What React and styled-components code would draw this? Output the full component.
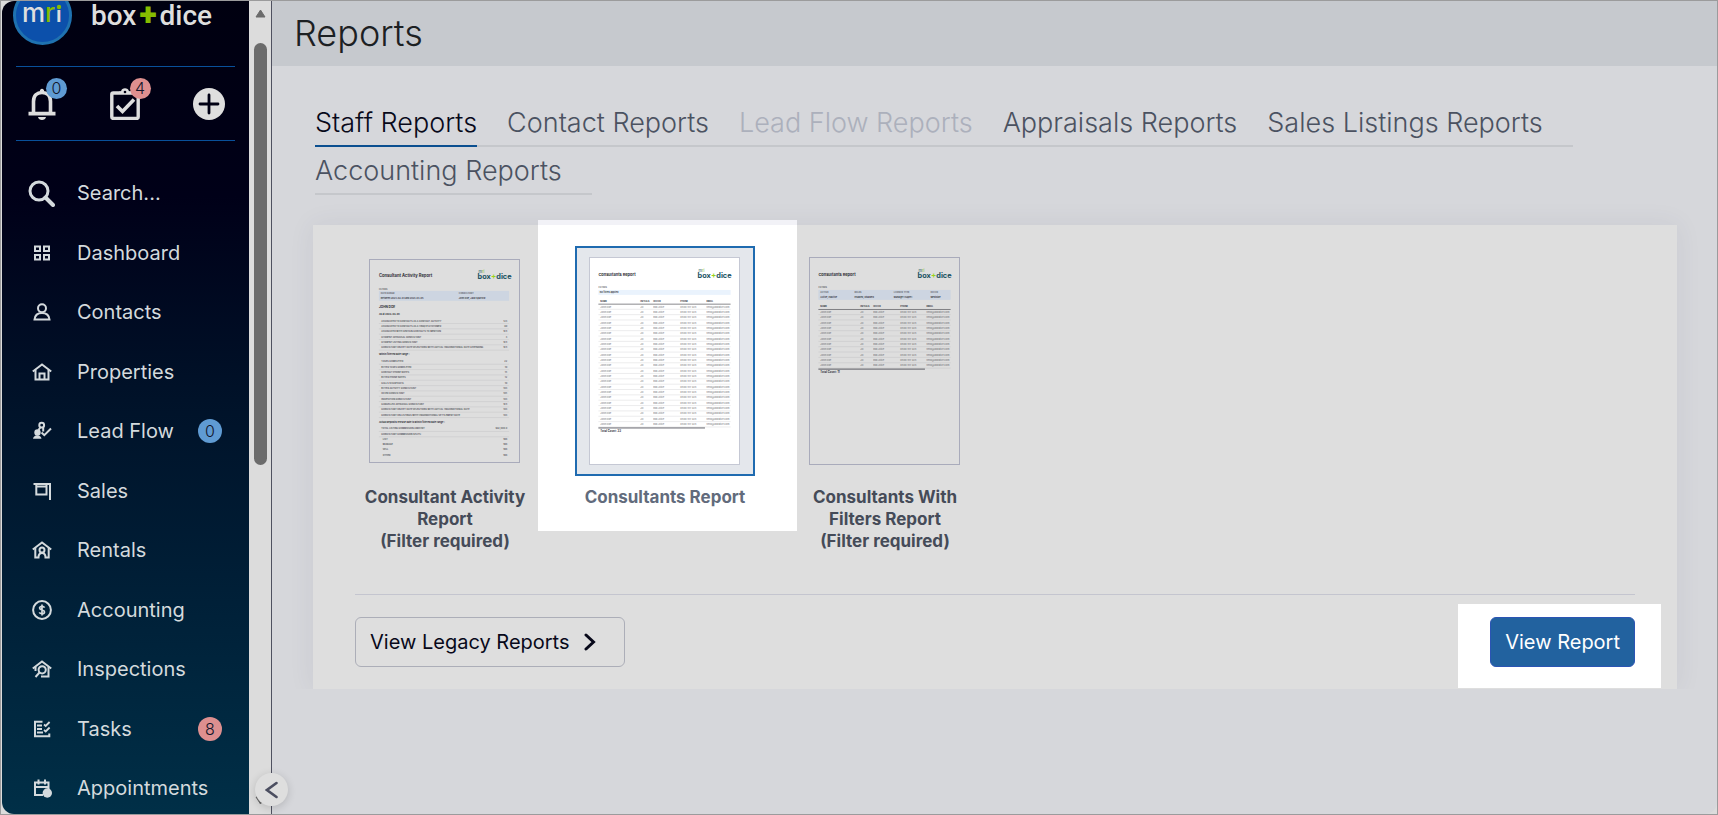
import { useState } from 'react';
import styled, { createGlobalStyle, css } from 'styled-components';

const GlobalStyle = createGlobalStyle`
	* {
		box-sizing: border-box;
	}

	body {
		margin: 0;
		font-family: Inter, "Open Sans", sans-serif;
		background: #d6d7db;
	}

	button {
		font-family: inherit;
		cursor: pointer;
	}
`;

const Frame = styled.div`
	display: flex;
	min-height: 100vh;
	padding-left: 1px;
	border: 1px solid #9b9b9c;
	background: #dcdcdc;
`;

/* ---------- sidebar ---------- */

const Sidebar = styled.aside`
	display: flex;
	flex-direction: column;
	flex: 0 0 247px;
	padding: 0 14px 6px;
	overflow: hidden;
	border-radius: 12px 0 0 12px;
	background: linear-gradient(#000010 0%, #000018 24%, #001229 49%, #002038 74%, #002f47 100%);
	color: #dedede;
`;

const Brand = styled.a`
	display: flex;
	align-items: center;
	gap: 19px;
	margin-top: -15px;
	padding: 0 0 20px;
	border-bottom: 1px solid #09509a;
	color: inherit;
	text-decoration: none;

	svg {
		overflow: visible;
	}
`;

const BrandName = styled.span`
	font-family: Roboto, sans-serif;
	font-size: 28px;
	line-height: 28px;
	font-weight: 500;

	b {
		padding: 0 3px;
		color: #86bc00;
		font-size: 32px;
		line-height: 1px;
		font-weight: 900;
	}
`;

const QuickActions = styled.div`
	display: flex;
	justify-content: space-between;
	padding: 21px 10px 20px 12px;
	border-bottom: 1px solid #09509a;
`;

const QuickButton = styled.button`
	position: relative;
	display: flex;
	padding: 0;
	border: 0;
	background: none;
	color: #dedede;
`;

const badgeTone = css`
	background: ${(props) => (props.$tone === 'red' ? '#dd8f8f' : '#5f9bd3')};
	color: #12162b;
	font-size: 16px;
	font-weight: 300;
	text-align: center;
`;

const CornerBadge = styled.span`
	${badgeTone}
	position: absolute;
	top: -10px;
	right: -11px;
	width: 21px;
	line-height: 21px;
	border-radius: 50%;
`;

const NavList = styled.nav`
	display: flex;
	flex: 1;
	flex-direction: column;
	justify-content: space-between;
	padding-top: 32px;
`;

const NavItem = styled.a`
	display: flex;
	align-items: center;
	height: 40px;
	padding: 0 13px 0 10px;
	color: #d4dadd;
	font-size: 20px;
	text-decoration: none;
`;

const NavIcon = styled.span`
	display: flex;
	justify-content: center;
	flex: 0 0 31px;
	margin-right: 20px;
`;

const RowBadge = styled.span`
	${badgeTone}
	width: 24px;
	margin-left: auto;
	line-height: 24px;
	border-radius: 50%;
`;

const ScrollTrack = styled.div`
	display: flex;
	flex-direction: column;
	align-items: center;
	flex: 0 0 22px;
	padding: 8px 0 9px;
	background: #dcdcdc;
`;

const ScrollThumb = styled.div`
	width: 13px;
	height: 53%;
	margin: 25px 0 auto;
	border-radius: 7px;
	background: #6b6b6b;
`;

/* ---------- main area ---------- */

const Main = styled.main`
	position: relative;
	flex: 1;
	min-width: 0;
	border-left: 1px solid #4f5160;
	border-radius: 0 0 12px 0;
	background: #d6d7db;
`;

const CollapseButton = styled.button`
	position: absolute;
	left: -17px;
	bottom: 8px;
	display: flex;
	align-items: center;
	justify-content: center;
	width: 33px;
	height: 33px;
	padding: 0;
	border: 0;
	border-radius: 50%;
	background: #dedede;
	box-shadow: 0 2px 8px rgba(0, 0, 0, 0.16);
	color: #4b4e60;
`;

const TitleBar = styled.header`
	padding: 0 22px;
	background: #c6c9ce;

	h1 {
		margin: 0;
		color: #1c2023;
		font-size: 36px;
		line-height: 65px;
		font-weight: 300;
	}
`;

const Content = styled.div`
	padding: 33px 40px 40px 41px;
`;

const Tabs = styled.div`
	display: flex;
	flex-wrap: wrap;
	margin: 0 2px 30px;
`;

const TabCell = styled.div`
	padding-right: 30px;
	border-bottom: 2px solid #c5c7cb;
`;

const Tab = styled.button`
	display: block;
	margin-bottom: -2px;
	padding: 2px 0 0;
	border: 0;
	border-bottom: 2px solid ${(props) => (props.$active ? '#0b4f90' : 'transparent')};
	background: none;
	color: ${(props) => (props.$active ? '#08091a' : '#4b5261')};
	font-size: 27px;
	line-height: 44px;
	font-weight: 300;

	&:disabled {
		color: #acb0bc;
		cursor: default;
	}
`;

const Panel = styled.section`
	isolation: isolate;
	padding: 21px 42px 22px;
	background: #dedede;
	box-shadow: 0 0 24px rgba(60, 60, 100, 0.08);
	clip-path: inset(-24px -24px 0 -24px);
`;

const ReportList = styled.div`
	display: flex;
	flex-wrap: wrap;
	gap: 40px;
	padding-bottom: 42px;
	border-bottom: 1px solid #c4c5cf;
`;

const ReportCard = styled.button`
	position: relative;
	display: flex;
	flex-direction: column;
	align-items: center;
	gap: 10px;
	width: 180px;
	padding: 0;
	border: 0;
	background: none;
	color: ${(props) => (props.$active ? '#626b7c' : '#454b58')};
	font-size: 17px;
	line-height: 22px;
	font-weight: 700;

	/* white halo behind the chosen report, reaching over the panel's top edge */
	&::before {
		content: "";
		display: ${(props) => (props.$active ? 'block' : 'none')};
		position: absolute;
		z-index: -1;
		inset: -26px -42px 21px -37px;
		border-top: 5px solid #f2f2f7;
		background: #fff;
	}
`;

const SheetFrame = styled.span`
	display: flex;
	align-items: center;
	width: 180px;
	height: 230px;
	padding: 0 12px;
	border: 2px solid ${(props) => (props.$active ? '#1f6bb0' : 'transparent')};
	background: ${(props) => (props.$active ? '#e4e7ec' : 'none')};

	svg {
		border: 1px solid ${(props) => (props.$active ? '#c5c8d4' : '#a9abbb')};
		background: ${(props) => (props.$active ? '#fff' : 'none')};
	}
`;

const CardLabel = styled.span`
	width: 172px;
	white-space: pre-line;
`;

const PanelFooter = styled.footer`
	display: flex;
	align-items: center;
	justify-content: space-between;
	padding-top: 22px;
`;

const Button = styled.button`
	display: flex;
	align-items: center;
	gap: 14px;
	height: 50px;
	padding: 0 ${(props) => (props.$primary ? '14px' : '28px')} 0 14px;
	border: 1px solid ${(props) => (props.$primary ? '#2b54b4' : '#acaeb8')};
	border-radius: 6px;
	background: ${(props) => (props.$primary ? '#22629f' : 'none')};
	color: ${(props) => (props.$primary ? '#fff' : '#08091a')};
	font-size: 20px;
`;

const Halo = styled.span`
	position: relative;

	&::before {
		content: "";
		position: absolute;
		z-index: -1;
		inset: -13px -26px -21px -32px;
		background: #fff;
	}
`;

/* ---------- icons ---------- */

function Icon({ size = 20, width = 2, children }) {
	return (
		<svg width={size} height={size} viewBox={`0 0 ${size} ${size}`} fill="none" stroke="currentColor" strokeWidth={width} aria-hidden="true">
			{children}
		</svg>
	);
}

const SearchIcon = () => (
	<Icon size={27} width={3}>
		<circle cx="11" cy="11" r="9" />
		<path d="M17.5 17.5 L25 25" strokeWidth="4" strokeLinecap="round" />
	</Icon>
);

const DashboardIcon = () => (
	<Icon>
		<path d="M3 3.5h5v4.5H3z M12 3.5h5v4.5h-5z M3 12h5v4.5H3z M12 12h5v4.5h-5z" />
	</Icon>
);

const ContactsIcon = () => (
	<Icon>
		<circle cx="10" cy="6.2" r="4" />
		<path d="M2.5 17.5 C3 12.5 6 11 10 11 S17 12.5 17.5 17.5 Z" />
	</Icon>
);

const PropertiesIcon = () => (
	<Icon>
		<path d="M0.8 9.5 L10 2.5 L19.2 9.5" />
		<path d="M3.5 8 V17.5 H16.5 V8 M7.5 17 V11.5 H12.5 V17" />
	</Icon>
);

const LeadFlowIcon = () => (
	<Icon>
		<circle cx="9.7" cy="4.2" r="2.4" />
		<path d="M8.2 6.5 L6.5 9 M11.2 6.5 V10.5" />
		<circle cx="5.5" cy="11.5" r="3.2" fill="currentColor" stroke="none" />
		<path d="M1 17.8 C1.5 13 9 13 9.5 17.8" fill="currentColor" stroke="none" />
		<path d="M9.5 11.5 L12.3 14.2 L19 7.5" />
	</Icon>
);

const SalesIcon = () => (
	<Icon>
		<path d="M1.5 3 H18 V19" />
		<path d="M4.3 3 V13.5 H14.5 V3 M4.3 5.5 H14.5" />
	</Icon>
);

const RentalsIcon = () => (
	<Icon>
		<path d="M0.8 9.5 L10 2.5 L19.2 9.5" />
		<path d="M3.3 8 V17.5 H6.5 C6.5 14 8 13 10 13 S13.5 14 13.5 17.5 H16.7 V8" />
		<circle cx="10" cy="10" r="2.5" />
	</Icon>
);

const AccountingIcon = () => (
	<Icon>
		<circle cx="10" cy="10" r="8.9" />
		<path d="M12.6 7.6 C12 6.6 11 6.4 10 6.4 C8.6 6.4 7.6 7 7.6 8.1 C7.6 10.6 12.5 9.4 12.5 11.9 C12.5 13 11.4 13.6 10 13.6 C8.8 13.6 7.8 13.2 7.3 12.3 M10 4.6 V15.4" strokeWidth="1.7" />
	</Icon>
);

const InspectionsIcon = () => (
	<Icon>
		<path d="M0.8 9.5 L10 2.5 L19.2 9.5" />
		<path d="M3.5 8 V12 M9 17.5 H16.5 V8" />
		<circle cx="10.2" cy="10.8" r="3.6" />
		<path d="M7.5 13.5 L3.5 18" />
	</Icon>
);

const TasksIcon = () => (
	<Icon>
		<path d="M10.5 2.8 H3 V17.2 H17.3 V14.5 M5 6.5 H10 M5 10 H10 M5 13.5 H11" />
		<path d="M12 5.5 L13.7 7 L17.6 3 M12 11 L13.7 12.5 L17.6 8.5" strokeWidth="1.8" />
	</Icon>
);

const AppointmentsIcon = () => (
	<Icon>
		<path d="M3 4.5 H16.5 V11 M3 3.5 V17 H11 M3 9 H16 M6.5 1.5 V6.5 M13 1.5 V6.5" />
		<circle cx="15.3" cy="15" r="4.7" fill="currentColor" stroke="none" />
	</Icon>
);

const BellIcon = () => (
	<svg width="28" height="32" viewBox="0 0 28 32" fill="none" stroke="currentColor" strokeWidth="3.6" aria-hidden="true">
		<path d="M5.5 26 V13.5 C5.5 7.5 9 4.5 14 4.5 S22.5 7.5 22.5 13.5 V26" />
		<path d="M0.5 25.6 H27.5" />
		<path d="M11.8 3.5 C11.8 -0.2 16.2 -0.2 16.2 3.5 Z M10 29 H18 C17.5 33 10.5 33 10 29 Z" fill="currentColor" stroke="none" />
	</svg>
);

const ClipboardIcon = () => (
	<svg width="30" height="32" viewBox="0 0 30 32" fill="none" stroke="currentColor" strokeWidth="3.4" aria-hidden="true">
		<rect x="1.8" y="5" width="26.4" height="25.4" rx="1.5" />
		<path d="M9 6 V3.5 H11 C11.5 -0.8 18.5 -0.8 19 3.5 H21 V6 Z" fill="currentColor" stroke="none" />
		<circle cx="15" cy="4" r="1.3" fill="#000014" stroke="none" />
		<path d="M7 18 L12.5 23.5 L24 11.5" strokeWidth="3.6" />
	</svg>
);

const AddIcon = () => (
	<svg width="32" height="32" viewBox="0 0 32 32" aria-hidden="true">
		<circle cx="16" cy="16" r="16" fill="currentColor" />
		<path d="M16 7 V25 M7 16 H25" stroke="#000014" strokeWidth="2.8" strokeLinecap="round" />
	</svg>
);

const MriLogo = () => (
	<svg width="56" height="60" viewBox="3 0 56 60" role="img" aria-label="mri">
		<circle cx="29.5" cy="29.5" r="28" fill="#0c50ab" stroke="#1f72b0" strokeWidth="3" />
		<text x="9" y="36" fontFamily="Inter, sans-serif" fontSize="26" fontWeight="500" fill="#dedede">
			m<tspan fill="#86bc00">r</tspan>i
		</text>
		<path d="M43 13 H50 V24 H43 Z" fill="#0c50ab" />
		<circle cx="46" cy="21" r="2.2" fill="#86bc00" />
	</svg>
);

const ScrollArrow = ({ down }) => (
	<svg width="11" height="9" viewBox="0 0 11 9" fill="#6b6b6b" stroke="#6b6b6b" strokeLinejoin="round" aria-hidden="true">
		<path d={down ? 'M1 1 H10 L5.5 8 Z' : 'M1 8 H10 L5.5 1 Z'} />
	</svg>
);

/* ---------- report previews ---------- */

const SHEET_FONT = 'Inter, sans-serif';

const SheetLogo = ({ y }) => (
	<g fontFamily={SHEET_FONT} fontWeight="700" fill="#17505f">
		<text x="110" y={y - 6} fontSize="4" fontWeight="400">
			m<tspan fill="#7fb81a">ri</tspan>
		</text>
		<text x="109" y={y} fontSize="7.4">
			box
		</text>
		<text x="122.6" y={y} fontSize="8" fill="#9bd31a">
			+
		</text>
		<text x="128" y={y} fontSize="7.4">
			dice
		</text>
	</g>
);

const activityLines = [
	['ASSOCIATED TO CONTACTS AS A CONTACT ACTIVITY', '123'],
	['ASSOCIATED TO CONTACTS AS A UNIQUE CUSTOMER', '90'],
	['ASSOCIATED WITH CERTAIN CONTACTS TO MENTION', '104'],
	['CURRENT APPRAISAL CONSULTANT', '3'],
	['CURRENT LISTING CONSULTANT', '104'],
	['CONSULTANT ON KEY DATE SELECTIONS WITH ACTUAL UNCONDITIONAL DATE APPENDING', '104'],
];

const rangeLines = [
	['TASKS COMPLETED', '22'],
	['BUYER TASKS COMPLETED', '10'],
	['CONTACT PHONE NOTES', '15'],
	['BUYER PHONE NOTES', '12'],
	['CALLS SUCCESSFUL', '10'],
	['BUYER ACTIVITY CONSULTANT', '103'],
	['OFFER CONSULTANT', '105'],
	['INSPECTION CONSULTANT', '103'],
	['CANCELLED APPRAISAL CONSULTANT', '104'],
	['CONSULTANT ON KEY DATE SELECTIONS WITH ACTUAL UNCONDITIONAL DATE', '103'],
	['CONSULTANT ON LISTINGS WITH UNCONDITIONAL SETTLEMENT DATE', '103'],
];

const feeLines = [
	['TOTAL LISTING COMMISSION AMOUNT', '$92,000.0'],
	['CONSULTANT COMMISSION SPLITS:', ''],
];

const splitLines = ['LIST', 'MANAGE', 'SELL', 'OTHER'];

function SheetLines({ lines, top }) {
	return lines.map(([label, value], i) => {
		const y = top + i * 5.4;
		return (
			<g key={label}>
				<text x="11.5" y={y} fontSize="2.3" fontWeight="600" opacity="0.85">
					{label}
				</text>
				<text x="139" y={y} fontSize="2.3" textAnchor="end" opacity="0.7">
					{value}
				</text>
				<path d={`M9 ${y + 2} H141`} stroke="#c0c0c2" strokeWidth="0.4" />
			</g>
		);
	});
}

const ActivitySheet = () => (
	<svg width="151" height="204" viewBox="0 0 151 204" fontFamily={SHEET_FONT} fill="#303038" aria-hidden="true">
		<text x="9" y="16.5" fontSize="4.2" fontWeight="700">
			Consultant Activity Report
		</text>
		<SheetLogo y={19} />
		<text x="9" y="30" fontSize="2.2" opacity="0.7">
			FILTERS
		</text>
		<rect x="9" y="31" width="132" height="10" fill="#cdd5e1" />
		<text x="11" y="34.6" fontSize="2.2" opacity="0.7">
			DATE RANGE
		</text>
		<text x="90" y="34.6" fontSize="2.2" opacity="0.7">
			CONSULTANT
		</text>
		<text x="11" y="39.4" fontSize="2.3" fontWeight="600">
			Between 2023-02-03 and 2023-03-06
		</text>
		<text x="90" y="39.4" fontSize="2.3" fontWeight="600">
			John Doe, Jack Sparrow
		</text>
		<text x="9" y="48.8" fontSize="3.2" fontWeight="700">
			JOHN DOE
		</text>
		<text x="9" y="55" fontSize="2.4" fontWeight="700">
			As at 2023-03-06
		</text>
		<SheetLines lines={activityLines} top={62} />
		<text x="9" y="96.3" fontSize="2.4" fontWeight="700">
			Within filtered date range :
		</text>
		<SheetLines lines={rangeLines} top={103.3} />
		<text x="9" y="164.5" fontSize="2.4" fontWeight="700">
			Actual deposits release date is within filtered date range :
		</text>
		<SheetLines lines={feeLines} top={171.4} />
		{splitLines.map((label, i) => (
			<g key={label} fontSize="2.3" opacity="0.85">
				<text x="13" y={182 + i * 5.3} fontWeight="600">
					{label}
				</text>
				<text x="139" y={182 + i * 5.3} textAnchor="end">
					103
				</text>
			</g>
		))}
	</svg>
);

const sheetColumns = [
	{ x: 10.5, head: 'NAME', value: 'John Doe' },
	{ x: 51, head: 'INITIALS', value: 'JD' },
	{ x: 64, head: 'OFFICE', value: 'Box+Dice' },
	{ x: 91.5, head: 'PHONE', value: '0400 417 324' },
	{ x: 118, head: 'EMAIL', value: 'hello@boxdice.com' },
];

const sheetFilters = [
	{ x: 10.5, head: 'ACTIVE', value: 'Active, Inactive' },
	{ x: 45, head: 'ROLES', value: 'Enabled, Disabled' },
	{ x: 85, head: 'LICENCE TYPE', value: 'Manager (Super)' },
	{ x: 122, head: 'OFFICE', value: 'Westside' },
];

function ConsultantsSheet({ rows, filtered }) {
	const head = filtered ? 49.6 : 44.2;
	const first = head + 5.6;
	const end = first + rows * 5.42 - 2.6;

	return (
		<svg width="151" height="208" viewBox="0 0 151 208" fontFamily={SHEET_FONT} fill="#303038" aria-hidden="true">
			<text x="8.5" y="17.5" fontSize="4" fontWeight="700">
				Consultants Report
			</text>
			<SheetLogo y={20} />
			<text x="8.5" y="30.4" fontSize="2.2" opacity="0.7">
				FILTERS
			</text>
			<rect x="8.5" y="32" width="134" height={filtered ? 10 : 5} fill={filtered ? '#cdd5e1' : '#eaf3fd'} />
			{filtered ? (
				sheetFilters.map((filter) => (
					<g key={filter.head}>
						<text x={filter.x} y="35.2" fontSize="2.2" opacity="0.7">
							{filter.head}
						</text>
						<text x={filter.x} y="40.4" fontSize="2.3" fontWeight="600">
							{filter.value}
						</text>
					</g>
				))
			) : (
				<text x="10" y="35.4" fontSize="2.3" fontWeight="600">
					No filters applied
				</text>
			)}
			{sheetColumns.map((col) => (
				<g key={col.head}>
					<text x={col.x} y={head} fontSize="2.2" fontWeight="700">
						{col.head}
					</text>
					{Array.from({ length: rows }, (_, i) => (
						<text key={i} x={col.x} y={first + i * 5.42} fontSize="2.4" opacity="0.5">
							{col.value}
						</text>
					))}
				</g>
			))}
			<path d={`M8.5 ${head + 2.2} H142.5`} stroke="#55555b" strokeWidth="0.7" />
			{Array.from({ length: rows }, (_, i) => (
				<path key={i} d={`M8.5 ${first + 1.8 + i * 5.42} H142.5`} stroke="#9a9aa0" strokeWidth="0.2" />
			))}
			<path d={`M8.5 ${end} H116.5`} stroke="#3c3c46" strokeWidth="0.8" />
			<text x="10.5" y={end + 4.4} fontSize="2.8" fontWeight="700">
				Total Count: {rows}
			</text>
		</svg>
	);
}

/* ---------- data ---------- */

const navItems = [
	{ label: 'Search...', icon: SearchIcon },
	{ label: 'Dashboard', icon: DashboardIcon },
	{ label: 'Contacts', icon: ContactsIcon },
	{ label: 'Properties', icon: PropertiesIcon },
	{ label: 'Lead Flow', icon: LeadFlowIcon, badge: 0 },
	{ label: 'Sales', icon: SalesIcon },
	{ label: 'Rentals', icon: RentalsIcon },
	{ label: 'Accounting', icon: AccountingIcon },
	{ label: 'Inspections', icon: InspectionsIcon },
	{ label: 'Tasks', icon: TasksIcon, badge: 8, tone: 'red' },
	{ label: 'Appointments', icon: AppointmentsIcon },
];

const tabs = [
	{ label: 'Staff Reports' },
	{ label: 'Contact Reports' },
	{ label: 'Lead Flow Reports', disabled: true },
	{ label: 'Appraisals Reports' },
	{ label: 'Sales Listings Reports' },
	{ label: 'Accounting Reports' },
];

const reports = [
	{ id: 'activity', label: 'Consultant Activity Report\n(Filter required)', sheet: <ActivitySheet /> },
	{ id: 'consultants', label: 'Consultants Report', sheet: <ConsultantsSheet rows={23} /> },
	{ id: 'filtered', label: 'Consultants With Filters Report\n(Filter required)', sheet: <ConsultantsSheet rows={11} filtered /> },
];

function App() {
	const [tab, setTab] = useState('Staff Reports');
	const [report, setReport] = useState('consultants');

	return (
		<>
			<GlobalStyle />
			<Frame>
				<Sidebar>
					<Brand href="#home">
						<MriLogo />
						<BrandName>
							box<b>+</b>dice
						</BrandName>
					</Brand>

					<QuickActions>
						<QuickButton aria-label="Notifications">
							<BellIcon />
							<CornerBadge>0</CornerBadge>
						</QuickButton>
						<QuickButton aria-label="My tasks">
							<ClipboardIcon />
							<CornerBadge $tone="red">4</CornerBadge>
						</QuickButton>
						<QuickButton aria-label="Add">
							<AddIcon />
						</QuickButton>
					</QuickActions>

					<NavList>
						{navItems.map(({ label, icon: ItemIcon, badge, tone }) => (
							<NavItem key={label} href={`#${label}`}>
								<NavIcon>
									<ItemIcon />
								</NavIcon>
								{label}
								{badge !== undefined && <RowBadge $tone={tone}>{badge}</RowBadge>}
							</NavItem>
						))}
					</NavList>
				</Sidebar>

				<ScrollTrack aria-hidden="true">
					<ScrollArrow />
					<ScrollThumb />
					<ScrollArrow down />
				</ScrollTrack>

				<Main>
					<CollapseButton aria-label="Collapse menu">
						<svg width="14" height="18" viewBox="0 0 14 18" fill="none" stroke="currentColor" strokeWidth="2.6" strokeLinecap="round">
							<path d="M11.5 2 L2 9 L11.5 16" />
						</svg>
					</CollapseButton>

					<TitleBar>
						<h1>Reports</h1>
					</TitleBar>

					<Content>
						<Tabs role="tablist">
							{tabs.map(({ label, disabled }) => (
								<TabCell key={label}>
									<Tab role="tab" aria-selected={label === tab} $active={label === tab} disabled={disabled} onClick={() => setTab(label)}>
										{label}
									</Tab>
								</TabCell>
							))}
						</Tabs>

						<Panel>
							<ReportList>
								{reports.map(({ id, label, sheet }) => (
									<ReportCard key={id} $active={id === report} onClick={() => setReport(id)}>
										<SheetFrame $active={id === report}>{sheet}</SheetFrame>
										<CardLabel>{label}</CardLabel>
									</ReportCard>
								))}
							</ReportList>

							<PanelFooter>
								<Button>
									View Legacy Reports
									<svg width="12" height="18" viewBox="0 0 12 18" fill="none" stroke="currentColor" strokeWidth="3" strokeLinecap="round" aria-hidden="true">
										<path d="M2 2 L9.5 9 L2 16" />
									</svg>
								</Button>
								<Halo>
									<Button $primary>View Report</Button>
								</Halo>
							</PanelFooter>
						</Panel>
					</Content>
				</Main>
			</Frame>
		</>
	);
}

export default App;
